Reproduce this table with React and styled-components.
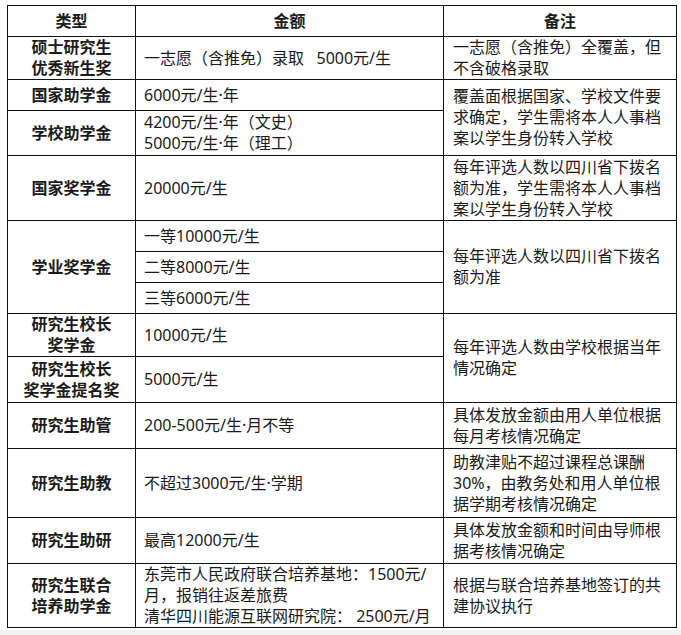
import styled, { createGlobalStyle } from 'styled-components'

const GlobalStyle = createGlobalStyle`
    html, body {
        margin: 0;
        padding: 0;
        background: #f2f2f2;
    }
    body {
        font-family: "Noto Sans", "Noto Sans CJK SC", sans-serif;
        color: #1b1b1b;
    }
`;

const Page = styled.div`
    background: #fff;
    padding: 5px 0 2px 7px;
    width: 681px;
    box-sizing: border-box;
`;

const Table = styled.table`
    width: 669px;
    border-collapse: collapse;
    table-layout: fixed;
    font-size: 16px;
    line-height: 21px;
`;

const Row = styled.tr`
    height: ${props => props.h}px;
`;

const Head = styled.th`
    border: 1px solid #111;
    font-weight: bold;
    text-align: center;
    padding: 0;
`;

const TypeCell = styled.td`
    border: 1px solid #111;
    font-weight: bold;
    text-align: center;
    vertical-align: middle;
    padding: 0 2px;
`;

const AmountCell = styled.td`
    border: 1px solid #111;
    vertical-align: middle;
    padding: 0 6px 0 8px;
    white-space: pre;
`;

const NoteCell = styled.td`
    border: 1px solid #111;
    vertical-align: middle;
    padding: 0 6px 0 9px;
`;

const Lines = ({ text }) => text.split('\n').map((l, i) => <div key={i}>{l}</div>);

const App = () => {
    return (
        <Page>
            <GlobalStyle />
            <Table>
                <colgroup>
                    <col style={{ width: 128 }} />
                    <col style={{ width: 308 }} />
                    <col style={{ width: 233 }} />
                </colgroup>
                <tbody>
                    <Row h={31}>
                        <Head>类型</Head>
                        <Head>金额</Head>
                        <Head>备注</Head>
                    </Row>
                    <Row h={43}>
                        <TypeCell><Lines text={"硕士研究生\n优秀新生奖"} /></TypeCell>
                        <AmountCell>一志愿（含推免）录取   5000元/生</AmountCell>
                        <NoteCell><Lines text={"一志愿（含推免）全覆盖，但\n不含破格录取"} /></NoteCell>
                    </Row>
                    <Row h={31}>
                        <TypeCell>国家助学金</TypeCell>
                        <AmountCell>6000元/生·年</AmountCell>
                        <NoteCell rowSpan={2}><Lines text={"覆盖面根据国家、学校文件要\n求确定，学生需将本人人事档\n案以学生身份转入学校"} /></NoteCell>
                    </Row>
                    <Row h={45}>
                        <TypeCell>学校助学金</TypeCell>
                        <AmountCell><Lines text={"4200元/生·年（文史）\n5000元/生·年（理工）"} /></AmountCell>
                    </Row>
                    <Row h={65}>
                        <TypeCell>国家奖学金</TypeCell>
                        <AmountCell>20000元/生</AmountCell>
                        <NoteCell><Lines text={"每年评选人数以四川省下拨名\n额为准，学生需将本人人事档\n案以学生身份转入学校"} /></NoteCell>
                    </Row>
                    <Row h={31}>
                        <TypeCell rowSpan={3}>学业奖学金</TypeCell>
                        <AmountCell>一等10000元/生</AmountCell>
                        <NoteCell rowSpan={3}><Lines text={"每年评选人数以四川省下拨名\n额为准"} /></NoteCell>
                    </Row>
                    <Row h={31}>
                        <AmountCell>二等8000元/生</AmountCell>
                    </Row>
                    <Row h={31}>
                        <AmountCell>三等6000元/生</AmountCell>
                    </Row>
                    <Row h={43}>
                        <TypeCell><Lines text={"研究生校长\n奖学金"} /></TypeCell>
                        <AmountCell>10000元/生</AmountCell>
                        <NoteCell rowSpan={2}><Lines text={"每年评选人数由学校根据当年\n情况确定"} /></NoteCell>
                    </Row>
                    <Row h={46}>
                        <TypeCell><Lines text={"研究生校长\n奖学金提名奖"} /></TypeCell>
                        <AmountCell>5000元/生</AmountCell>
                    </Row>
                    <Row h={46}>
                        <TypeCell>研究生助管</TypeCell>
                        <AmountCell>200-500元/生·月不等</AmountCell>
                        <NoteCell><Lines text={"具体发放金额由用人单位根据\n每月考核情况确定"} /></NoteCell>
                    </Row>
                    <Row h={69}>
                        <TypeCell>研究生助教</TypeCell>
                        <AmountCell>不超过3000元/生·学期</AmountCell>
                        <NoteCell><Lines text={"助教津贴不超过课程总课酬\n30%，由教务处和用人单位根\n据学期考核情况确定"} /></NoteCell>
                    </Row>
                    <Row h={46}>
                        <TypeCell>研究生助研</TypeCell>
                        <AmountCell>最高12000元/生</AmountCell>
                        <NoteCell><Lines text={"具体发放金额和时间由导师根\n据考核情况确定"} /></NoteCell>
                    </Row>
                    <Row h={64}>
                        <TypeCell><Lines text={"研究生联合\n培养助学金"} /></TypeCell>
                        <AmountCell><Lines text={"东莞市人民政府联合培养基地：1500元/\n月，报销往返差旅费\n清华四川能源互联网研究院： 2500元/月"} /></AmountCell>
                        <NoteCell><Lines text={"根据与联合培养基地签订的共\n建协议执行"} /></NoteCell>
                    </Row>
                </tbody>
            </Table>
        </Page>
    )
}

export default App
